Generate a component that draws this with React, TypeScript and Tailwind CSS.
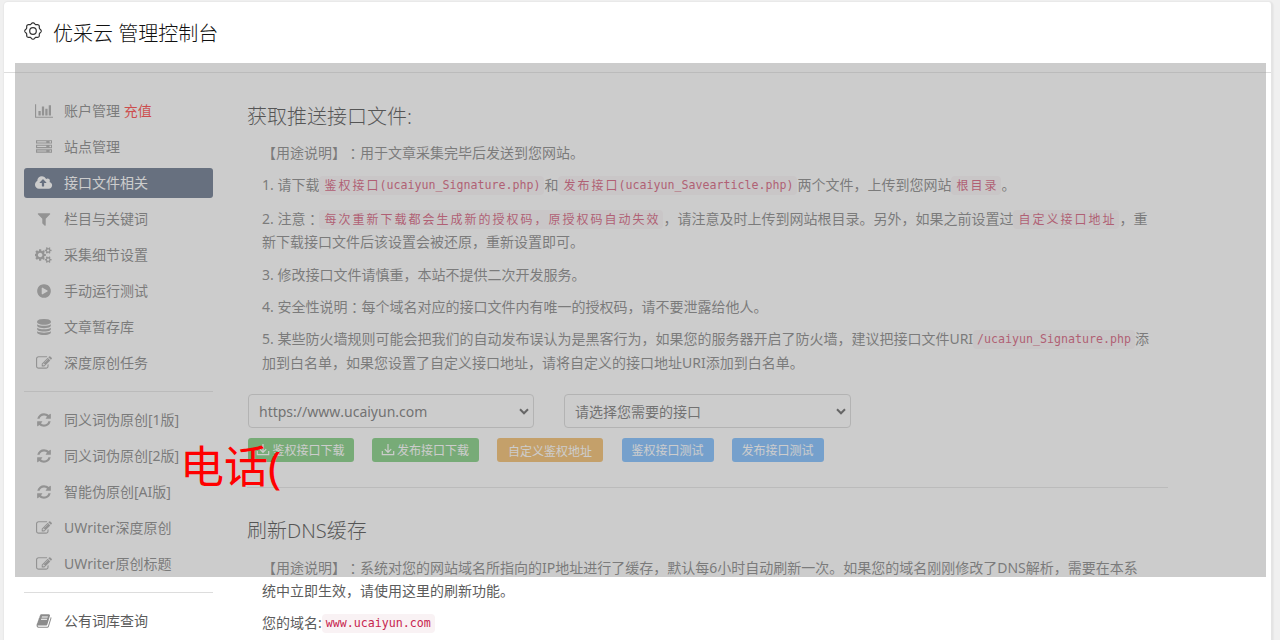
import type { ReactNode } from "react";

const PATHS = {
  chart: ["0 0 2048 1792", "M640 896v512H384V896h256zm384-512v1024H768V384h256zm1024 1152v128H0V128h128v1408h1920zM1408 640v768h-256V640h256zm384-384v1152h-256V256h256z"],
  server: ["0 0 1792 1792", "M128 1408h1024v-128h-1024v128zm0-512h1024v-128h-1024v128zm1568 448q0-40-28-68t-68-28-68 28-28 68 28 68 68 28 68-28 28-68zm-1568-960h1024v-128h-1024v128zm1568 448q0-40-28-68t-68-28-68 28-28 68 28 68 68 28 68-28 28-68zm0-512q0-40-28-68t-68-28-68 28-28 68 28 68 68 28 68-28 28-68zm96 832v384h-1792v-384h1792zm0-512v384h-1792v-384h1792zm0-512v384h-1792v-384h1792z"],
  cloud: ["-64 0 1920 1792", "M1216 864q0-14-9-23l-352-352q-9-9-23-9t-23 9l-351 351q-10 12-10 24 0 14 9 23t23 9h224v352q0 13 9.5 22.5t22.5 9.5h192q13 0 22.5-9.5t9.5-22.5v-352h224q13 0 22.5-9.5t9.5-22.5zm640 288q0 159-112.5 271.5t-271.5 112.5h-1088q-185 0-316.5-131.5t-131.5-316.5q0-130 70-240t188-165q-2-30-2-43 0-212 150-362t362-150q156 0 285.5 87t188.5 231q71-62 166-62 106 0 181 75t75 181q0 76-41 138 130 31 213.5 135.5t83.5 238.5z"],
  filter: ["0 0 1792 1792", "M1595 295q17 41-14 70l-493 493v742q0 42-39 59-13 5-25 5-27 0-45-19l-256-256q-19-19-19-45v-486l-493-493q-31-29-14-70 17-39 59-39h1280q42 0 59 39z"],
  cogs: ["0 0 1920 1792", "M832 896q0-106-75-181t-181-75-181 75-75 181 75 181 181 75 181-75 75-181zm768 512q0-52-38-90t-90-38-90 38-38 90q0 53 37.5 90.5t90.5 37.5 90.5-37.5 37.5-90.5zm0-1024q0-52-38-90t-90-38-90 38-38 90q0 53 37.5 90.5t90.5 37.5 90.5-37.5 37.5-90.5zm-384 421v185q0 10-7 19.5t-16 10.5l-155 24q-11 35-32 76 34 48 90 115 7 11 7 20 0 12-7 19-23 30-82.5 89.5t-78.5 59.5q-11 0-21-7l-115-90q-37 19-77 31-11 108-23 155-7 24-30 24h-186q-11 0-20-7.5t-10-17.5l-23-153q-34-10-75-31l-118 89q-7 7-20 7-11 0-21-8-144-133-144-160 0-9 7-19 10-14 41-53t47-61q-23-44-35-82l-152-24q-10-1-17-9.5t-7-19.5v-185q0-10 7-19.5t16-10.5l155-24q11-35 32-76-34-48-90-115-7-11-7-20 0-12 7-20 22-30 82-89t79-59q11 0 21 7l115 90q34-18 77-32 11-108 23-154 7-24 30-24h186q11 0 20 7.5t10 17.5l23 153q34 10 75 31l118-89q8-7 20-7 11 0 21 8 144 133 144 160 0 8-7 19-12 16-42 54t-45 60q23 48 34 82l152 23q10 2 17 10.5t7 19.5zm640 533v140q0 16-149 31-12 27-30 52 51 113 51 138 0 4-4 7-122 71-124 71-8 0-46-47t-52-68q-20 2-30 2t-30-2q-14 21-52 68t-46 47q-2 0-124-71-4-3-4-7 0-25 51-138-18-25-30-52-149-15-149-31v-140q0-16 149-31 13-29 30-52-51-113-51-138 0-4 4-7 4-2 35-20t59-34 30-16q8 0 46 46.5t52 67.5q20-2 30-2t30 2q51-71 92-112l6-2q4 0 124 70 4 3 4 7 0 25-51 138 17 23 30 52 149 15 149 31zm0-1024v140q0 16-149 31-12 27-30 52 51 113 51 138 0 4-4 7-122 71-124 71-8 0-46-47t-52-68q-20 2-30 2t-30-2q-14 21-52 68t-46 47q-2 0-124-71-4-3-4-7 0-25 51-138-18-25-30-52-149-15-149-31v-140q0-16 149-31 13-29 30-52-51-113-51-138 0-4 4-7 4-2 35-20t59-34 30-16q8 0 46 46.5t52 67.5q20-2 30-2t30 2q51-71 92-112l6-2q4 0 124 70 4 3 4 7 0 25-51 138 17 23 30 52 149 15 149 31z"],
  play: ["0 0 1792 1792", "M896 128q209 0 385.5 103t279.5 279.5 103 385.5-103 385.5-279.5 279.5-385.5 103-385.5-103-279.5-279.5-103-385.5 103-385.5 279.5-279.5 385.5-103zm384 823q32-18 32-55t-32-55l-544-320q-31-19-64-1-32 19-32 56v640q0 37 32 56 16 8 32 8 17 0 32-9z"],
  database: ["0 0 1792 1792", "M896 768q237 0 443-43t325-127v170q0 69-103 128t-280 93.5-385 34.5-385-34.5-280-93.5-103-128v-170q119 84 325 127t443 43zm0 768q237 0 443-43t325-127v170q0 69-103 128t-280 93.5-385 34.5-385-34.5-280-93.5-103-128v-170q119 84 325 127t443 43zm0-384q237 0 443-43t325-127v170q0 69-103 128t-280 93.5-385 34.5-385-34.5-280-93.5-103-128v-170q119 84 325 127t443 43zm0-1152q208 0 385 34.5t280 93.5 103 128v128q0 69-103 128t-280 93.5-385 34.5-385-34.5-280-93.5-103-128v-128q0-69 103-128t280-93.5 385-34.5z"],
  edit: ["0 0 1792 1792", "M888 1184l116-116-152-152-116 116v56h96v96h56zm440-720q-16-16-33 1l-350 350q-17 17-1 33t33-1l350-350q17-17 1-33zm80 594v190q0 119-84.5 203.5t-203.5 84.5h-832q-119 0-203.5-84.5t-84.5-203.5v-832q0-119 84.5-203.5t203.5-84.5h832q63 0 117 25 15 7 18 23 3 17-9 29l-49 49q-14 14-32 8-23-6-45-6h-832q-66 0-113 47t-47 113v832q0 66 47 113t113 47h832q66 0 113-47t47-113v-126q0-13 9-22l64-64q15-15 35-7t20 29zm-96-738l288 288-672 672h-288v-288zm444 132l-92 92-288-288 92-92q28-28 68-28t68 28l152 152q28 28 28 68t-28 68z"],
  refresh: ["0 0 1792 1792", "M1639 1056q0 5-1 7-64 268-268 434.5t-478 166.5q-146 0-282.5-55t-243.5-157l-129 129q-19 19-45 19t-45-19-19-45v-448q0-26 19-45t45-19h448q26 0 45 19t19 45-19 45l-137 137q71 66 161 102t187 36q134 0 250-65t186-179q11-17 53-117 8-23 30-23h192q13 0 22.5 9.5t9.5 22.5zm25-800v448q0 26-19 45t-45 19h-448q-26 0-45-19t-19-45 19-45l138-138q-148-137-349-137-134 0-250 65t-186 179q-11 17-53 117-8 23-30 23h-199q-13 0-22.5-9.5t-9.5-22.5v-7q65-268 270-434.5t480-166.5q146 0 284 55.5t245 156.5l130-129q19-19 45-19t45 19 19 45z"],
  book: ["0 0 1792 1792", "M1703 478q40 57 18 129l-275 906q-19 64-76.5 107.5t-122.5 43.5h-923q-77 0-148.5-53.5t-99.5-131.5q-24-67-2-127 0-4 3-27t4-37q1-8-3-21.5t-3-19.5q2-11 8-21t16.5-23.5 16.5-23.5q23-38 45-91.5t30-91.5q3-10 .5-30t-.5-28q3-11 17-28t17-23q21-36 42-92t25-90q1-9-2.5-32t.5-28q4-13 22-30.5t22-22.5q19-26 42.5-84.5t27.5-96.5q1-8-3-25.5t-2-26.5q2-8 9-18t18-23 17-21q8-12 16.5-30.5t15-35 16-36 19.5-32 26.5-23.5 36-11.5 47.5 5.5l-1 3q38-9 51-9h761q74 0 114 56t18 130l-274 906q-36 119-71.5 153.5t-128.5 34.5h-869q-27 0-38 15-11 16-1 43 24 70 144 70h923q29 0 56-15.5t35-41.5l300-987q7-22 5-57 38 15 59 43zm-1064 2q-4 13 2 22.5t20 9.5h608q13 0 25.5-9.5t16.5-22.5l21-64q4-13-2-22.5t-20-9.5h-608q-13 0-25.5 9.5t-16.5 22.5zm-83 256q-4 13 2 22.5t20 9.5h608q13 0 25.5-9.5t16.5-22.5l21-64q4-13-2-22.5t-20-9.5h-608q-13 0-25.5 9.5t-16.5 22.5z"],
};

type IconName = keyof typeof PATHS;

function Icon({ name }: { name: IconName }) {
  const [box, d] = PATHS[name];
  return (
    <svg viewBox={box} className="h-4 w-auto shrink-0" fill="currentColor">
      <path d={d} />
    </svg>
  );
}

const GEAR_POINTS = Array.from({ length: 128 }, (_, i) => {
  const a = (i / 128) * Math.PI * 2;
  const r = 7.6 + 0.65 * Math.cos(a * 8);
  return `${(10 + r * Math.sin(a)).toFixed(2)},${(10 - r * Math.cos(a)).toFixed(2)}`;
}).join(" ");

function Gear() {
  return (
    <svg viewBox="0 0 20 20" className="h-5 w-5 shrink-0" fill="none" stroke="#333" strokeWidth="1.2">
      <polygon points={GEAR_POINTS} />
      <circle cx="10" cy="10" r="3.3" />
    </svg>
  );
}

function NavItem({ icon, active, children }: { icon: IconName; active?: boolean; children: ReactNode }) {
  return (
    <li
      className={
        active
          ? "flex h-[30px] items-center rounded-[3px] bg-[#354765] text-white"
          : "flex h-[30px] items-center text-[#5c5c5c]"
      }
    >
      <span className={active ? "flex w-10 justify-center text-white" : "flex w-10 justify-center text-[#8c8c8c]"}>
        <Icon name={icon} />
      </span>
      <span className="whitespace-pre">{children}</span>
    </li>
  );
}

function Code({ children }: { children: ReactNode }) {
  return (
    <code className="mt-px flex h-[19px] items-center rounded bg-[#f9f2f4] px-1 pt-px font-['DejaVu_Sans_Mono','Noto_Sans_CJK_SC',monospace] text-[11.63px] text-[#c7254e]">
      {children}
    </code>
  );
}

function Wide({ children }: { children: ReactNode }) {
  return <span className="pl-px -mr-px text-[12px] tracking-[2px]">{children}</span>;
}

function Colon() {
  return <span className="font-['Noto_Sans_CJK_TC',sans-serif]">：</span>;
}

function Line({ className, children }: { className: string; children: ReactNode }) {
  return <div className={`flex h-[23px] items-center whitespace-pre ${className}`}>{children}</div>;
}

function Select({ className, children }: { className: string; children: ReactNode }) {
  return (
    <div className={`flex h-[34px] items-center justify-between rounded border border-[#ccc] bg-white pt-px pr-1 pl-2.5 text-[#4a4a4a] ${className}`}>
      <span>{children}</span>
      <svg viewBox="0 0 10 8" className="h-2 w-2.5" fill="none" stroke="#333" strokeWidth="2">
        <path d="M1 1.3l4 4 4-4" />
      </svg>
    </div>
  );
}

function Download() {
  return (
    <svg viewBox="0 0 14 14" className="-mt-0.5 mr-0.5 h-3.5 w-3.5" fill="none" stroke="currentColor" strokeWidth="1.2">
      <path d="M7 1v8.2M3.8 6.2L7 9.4l3.2-3.2M1.3 8v3.7h11.4V8" />
    </svg>
  );
}

export default function App() {
  return (
    <div className="relative h-[640px] w-[1280px] overflow-hidden bg-[#f0f0f0] pt-0.5 pl-1 font-['Noto_Sans','Noto_Sans_CJK_SC',sans-serif] text-[14px] leading-none text-[#5c5c5c] [font-feature-settings:'chws'_0,'kern'_0] [text-spacing-trim:space-all]">
      <div className="h-[660px] w-[1269px] rounded border-r-2 border-[#e4e4e4] bg-white shadow-[0_0_1px_1px_#e8e8e8]">
        <header className="flex h-[71px] items-start border-b border-[#ddd] pt-[19px] pl-[19px]">
          <Gear />
          <h1 className="ml-2.5 mt-[3px] whitespace-pre text-[20px] font-light text-[#111]">优采云 管理控制台</h1>
        </header>
        <div className="flex pl-5">
          <nav className="w-[189px] pt-[23px]">
            <ul className="flex flex-col gap-1.5">
              <NavItem icon="chart">账户管理 <span className="text-[#f00]">充值</span></NavItem>
              <NavItem icon="server">站点管理</NavItem>
              <NavItem icon="cloud" active>接口文件相关</NavItem>
              <NavItem icon="filter">栏目与关键词</NavItem>
              <NavItem icon="cogs">采集细节设置</NavItem>
              <NavItem icon="play">手动运行测试</NavItem>
              <NavItem icon="database">文章暂存库</NavItem>
              <NavItem icon="edit">深度原创任务</NavItem>
            </ul>
            <hr className="mt-[13px] mb-[13px] border-[#ddd]" />
            <ul className="flex flex-col gap-1.5">
              <NavItem icon="refresh">同义词伪原创[1版]</NavItem>
              <NavItem icon="refresh">同义词伪原创[2版]</NavItem>
              <NavItem icon="refresh">智能伪原创[AI版]</NavItem>
              <NavItem icon="edit">UWriter深度原创</NavItem>
              <NavItem icon="edit">UWriter原创标题</NavItem>
            </ul>
            <hr className="mt-[13px] mb-[13px] border-[#ddd]" />
            <ul>
              <NavItem icon="book">公有词库查询</NavItem>
            </ul>
          </nav>
          <main className="ml-[34px] w-[921px] pt-[34px]">
            <h2 className="text-[20px] font-light text-[#111]">获取推送接口文件:</h2>
            <div className="mt-3.5 pl-[15px]">
              <Line className="">【用途说明】<Colon />用于文章采集完毕后发送到您网站。</Line>
              <Line className="mt-[9px]">
                1. 请下载<Code><Wide>鉴权接口</Wide>(ucaiyun_Signature.php)</Code>和<Code><Wide>发布接口</Wide>(ucaiyun_Savearticle.php)</Code>两个文件，上传到您网站<Code><Wide>根目录</Wide></Code>。
              </Line>
              <Line className="mt-[11px]">
                2. 注意<Colon /><Code><Wide>每次重新下载都会生成新的授权码，原授权码自动失效</Wide></Code>，请注意及时上传到网站根目录。另外，如果之前设置过<Code><Wide>自定义接口地址</Wide></Code>，重
              </Line>
              <Line className="">新下载接口文件后该设置会被还原，重新设置即可。</Line>
              <Line className="mt-2.5">3. 修改接口文件请慎重，本站不提供二次开发服务。</Line>
              <Line className="mt-[9px]">4. 安全性说明<Colon />每个域名对应的接口文件内有唯一的授权码，请不要泄露给他人。</Line>
              <Line className="mt-[9px]">
                5. 某些防火墙规则可能会把我们的自动发布误认为是黑客行为，如果您的服务器开启了防火墙，建议把接口文件URI<Code>/ucaiyun_Signature.php</Code>添
              </Line>
              <Line className="mt-px">加到白名单，如果您设置了自定义接口地址，请将自定义的接口地址URI添加到白名单。</Line>
            </div>
            <div className="mt-5 flex gap-[30px] pl-px">
              <Select className="w-[286px]">https://www.ucaiyun.com</Select>
              <Select className="w-[287px]">请选择您需要的接口</Select>
            </div>
            <div className="mt-2.5 flex pl-px text-[12px] text-white">
              <button className="mr-[18px] flex h-6 w-[106px] items-center justify-center rounded-[3px] bg-[#55bd55] pt-px pr-px"><Download />鉴权接口下载</button>
              <button className="mr-[18px] flex h-6 w-[107px] items-center justify-center rounded-[3px] bg-[#55bd55] pt-px pr-px"><Download />发布接口下载</button>
              <button className="mr-[19px] h-6 w-[106px] rounded-[3px] bg-[#efa73b] pt-[3px]">自定义鉴权地址</button>
              <button className="mr-[18px] h-6 w-[92px] rounded-[3px] bg-[#51a7ff] pt-px pr-px">鉴权接口测试</button>
              <button className="h-6 w-[92px] rounded-[3px] bg-[#51a7ff] pt-px pr-px">发布接口测试</button>
            </div>
            <hr className="mt-[25px] border-[#ddd]" />
            <h2 className="mt-[33px] text-[20px] font-light text-[#111]">刷新DNS缓存</h2>
            <div className="mt-[15px] pl-[15px]">
              <Line className="">【用途说明】<Colon />系统对您的网站域名所指向的IP地址进行了缓存，默认每6小时自动刷新一次。如果您的域名刚刚修改了DNS解析，需要在本系</Line>
              <Line className="">统中立即生效，请使用这里的刷新功能。</Line>
              <Line className="mt-[9px]">您的域名:<Code>www.ucaiyun.com</Code></Line>
            </div>
          </main>
        </div>
      </div>
      <div className="absolute top-[63px] left-[15px] h-[514px] w-[1251px] bg-[#999]/50" />
      <div className="absolute top-[443px] left-[180px] whitespace-pre text-[44px] leading-[46px] text-[#f00]">电话(</div>
    </div>
  );
}
